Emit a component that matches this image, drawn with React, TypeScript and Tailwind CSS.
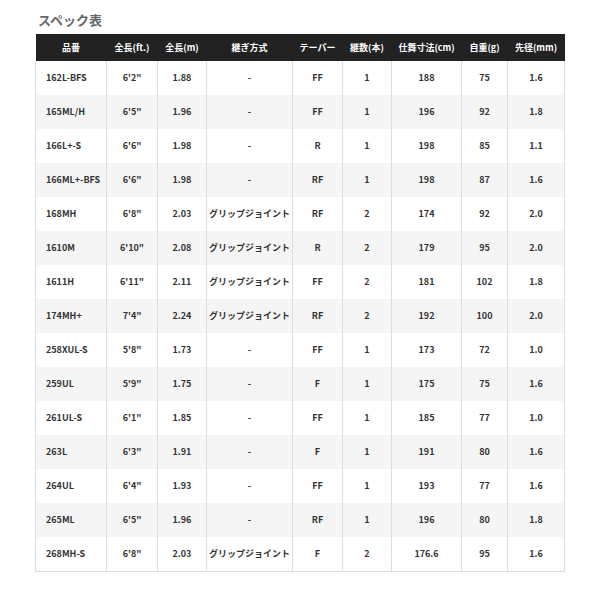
import React from 'react'

const headers = ['品番', '全長(ft.)', '全長(m)', '継ぎ方式', 'テーパー', '継数(本)', '仕舞寸法(cm)', '自重(g)', '先径(mm)']

const widths = ['w-[71px]', 'w-[51px]', 'w-[49px]', 'w-[86px]', 'w-[50px]', 'w-[49px]', 'w-[70px]', 'w-[46px]', 'w-[57px]']

const rows: string[][] = [
  ['162L-BFS', `6'2"`, '1.88', '-', 'FF', '1', '188', '75', '1.6'],
  ['165ML/H', `6'5"`, '1.96', '-', 'FF', '1', '196', '92', '1.8'],
  ['166L+-S', `6'6"`, '1.98', '-', 'R', '1', '198', '85', '1.1'],
  ['166ML+-BFS', `6'6"`, '1.98', '-', 'RF', '1', '198', '87', '1.6'],
  ['168MH', `6'8"`, '2.03', 'グリップジョイント', 'RF', '2', '174', '92', '2.0'],
  ['1610M', `6'10"`, '2.08', 'グリップジョイント', 'R', '2', '179', '95', '2.0'],
  ['1611H', `6'11"`, '2.11', 'グリップジョイント', 'FF', '2', '181', '102', '1.8'],
  ['174MH+', `7'4"`, '2.24', 'グリップジョイント', 'RF', '2', '192', '100', '2.0'],
  ['258XUL-S', `5'8"`, '1.73', '-', 'FF', '1', '173', '72', '1.0'],
  ['259UL', `5'9"`, '1.75', '-', 'F', '1', '175', '75', '1.6'],
  ['261UL-S', `6'1"`, '1.85', '-', 'FF', '1', '185', '77', '1.0'],
  ['263L', `6'3"`, '1.91', '-', 'F', '1', '191', '80', '1.6'],
  ['264UL', `6'4"`, '1.93', '-', 'FF', '1', '193', '77', '1.6'],
  ['265ML', `6'5"`, '1.96', '-', 'RF', '1', '196', '80', '1.8'],
  ['268MH-S', `6'8"`, '2.03', 'グリップジョイント', 'F', '2', '176.6', '95', '1.6'],
]

export default function App() {
  return (
    <div
      className="w-[600px] h-[600px] bg-white pt-[10px] pl-[35px]"
      style={{ fontFamily: '"Noto Sans CJK JP", "Noto Sans", sans-serif' }}
    >
      <h2 className="pl-[3px] text-[13px] leading-[20px] font-bold text-[#666]">スペック表</h2>
      <table className="mt-[4px] w-[529px] table-fixed border-collapse text-[9px] font-bold text-[#333] whitespace-nowrap">
        <thead>
          <tr className="h-[27px] bg-[#222] text-white">
            {headers.map((h, i) => (
              <th key={h} className={`${widths[i]} p-0 text-center font-bold`}>
                {h}
              </th>
            ))}
          </tr>
        </thead>
        <tbody>
          {rows.map((r, ri) => (
            <tr key={r[0]} className={`h-[34px] ${ri % 2 === 1 ? 'bg-[#f5f5f5]' : 'bg-white'} ${ri === rows.length - 1 ? 'border-b border-[#ddd]' : ''}`}>
              {r.map((c, ci) => (
                <td
                  key={ci}
                  className={`p-0 border-l border-r border-[#ddd] ${ci === 0 ? 'text-left pl-[10px]' : 'text-center'}`}
                >
                  {c}
                </td>
              ))}
            </tr>
          ))}
        </tbody>
      </table>
    </div>
  )
}
